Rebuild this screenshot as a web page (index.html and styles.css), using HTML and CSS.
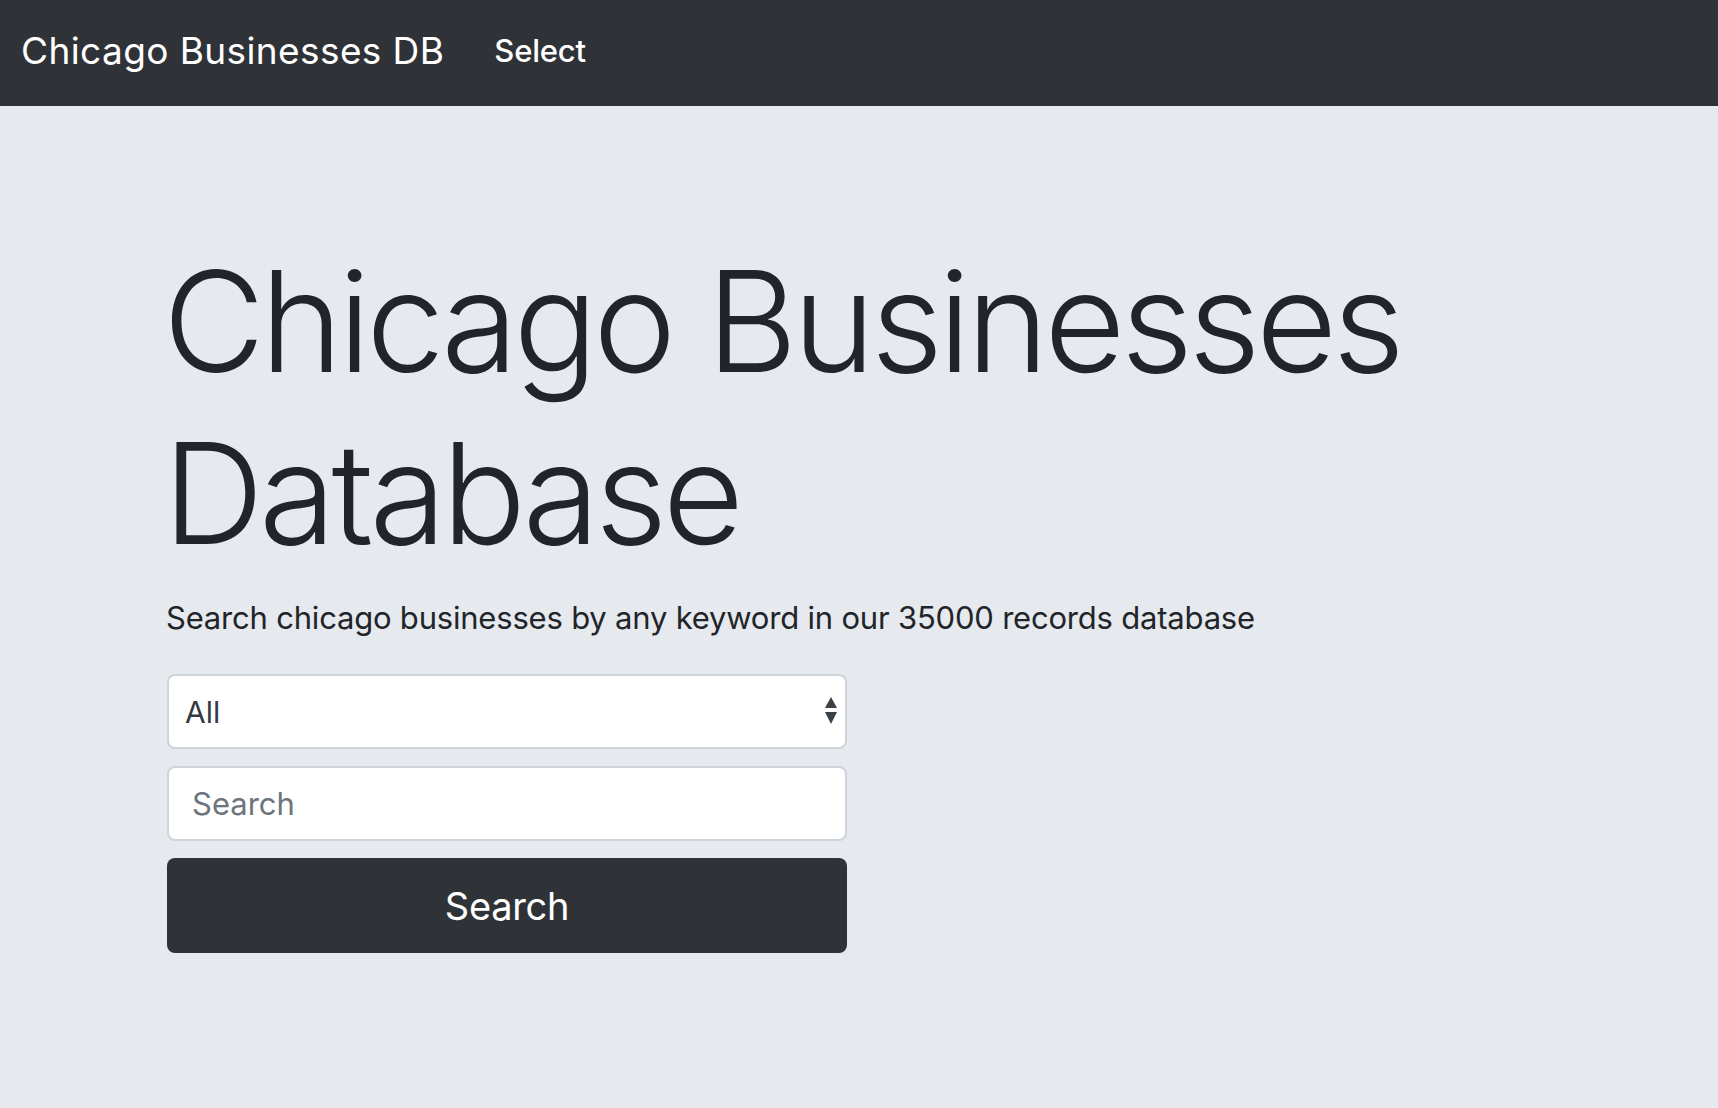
FILE: index.html
```html
<!DOCTYPE html>
<html lang="en">
<head>
<meta charset="utf-8">
<title>Chicago Businesses DB</title>
<link rel="stylesheet" href="styles.css">
</head>
<body>
<nav class="navbar">
  <a class="brand" href="#">Chicago Businesses DB</a>
  <a class="nav-link" href="#">Select</a>
</nav>
<main class="jumbotron">
  <h1 class="display">Chicago Businesses Database</h1>
  <p class="lead">Search chicago businesses by any keyword in our 35000 records database</p>
  <form class="search-form">
    <div class="select-wrap">
      <select class="control select">
        <option>All</option>
      </select>
      <svg class="select-arrows" width="14" height="30" viewBox="0 0 14 30" aria-hidden="true">
        <polygon points="7,0 13,11 1,11" fill="#3b4045"/>
        <polygon points="1,15 13,15 7,27" fill="#3b4045"/>
      </svg>
    </div>
    <input class="control input" type="text" placeholder="Search">
    <button class="btn" type="button">Search</button>
  </form>
</main>
</body>
</html>
```

FILE: styles.css
```css
html, body {
  margin: 0;
  padding: 0;
}
body {
  background: #e6e9ed;
  font-family: Inter, "Liberation Sans", sans-serif;
  color: #212529;
  min-height: 1108px;
}
.navbar {
  background: #2f3338;
  height: 106px;
  display: flex;
  align-items: center;
  padding: 0 0 6px 21px;
  box-sizing: border-box;
}
.brand {
  color: #fff;
  text-decoration: none;
  font-size: 37px;
  font-weight: 400;
  letter-spacing: 0.4px;
  margin-right: 50px;
  line-height: 1;
}
.nav-link {
  color: #fff;
  text-decoration: none;
  font-size: 31px;
  font-weight: 500;
  letter-spacing: -0.2px;
  line-height: 1;
}
.jumbotron {
  padding: 129px 0 0 167px;
}
.display {
  margin: 0 0 0 -4px;
  font-size: 140px;
  font-weight: 300;
  line-height: 172px;
  letter-spacing: -4.6px;
  color: #212529;
  max-width: 1300px;
}
.lead {
  margin: 16px 0 0 -1px;
  font-size: 31px;
  line-height: 46px;
  font-weight: 400;
  letter-spacing: -0.2px;
}
.search-form {
  width: 680px;
  margin-top: 33px;
  display: flex;
  flex-direction: column;
  gap: 17px;
}
.select-wrap {
  position: relative;
}
.control {
  display: block;
  width: 100%;
  box-sizing: border-box;
  height: 75px;
  border: 2px solid #ced4da;
  border-radius: 8px;
  background: #fff;
  font-family: Inter, "Liberation Sans", sans-serif;
  font-size: 30px;
  color: #343a40;
  margin: 0;
}
.select {
  -webkit-appearance: none;
  appearance: none;
  padding: 0 40px 0 16px;
}
.select-arrows {
  position: absolute;
  right: 9px;
  top: 23px;
  pointer-events: none;
}
.input {
  padding: 0 23px;
  font-size: 31px;
}
.input::placeholder {
  color: #6c757d;
  opacity: 1;
}
.btn {
  height: 95px;
  width: 100%;
  border: none;
  border-radius: 8px;
  background: #2f3338;
  color: #fff;
  font-family: Inter, "Liberation Sans", sans-serif;
  font-size: 38px;
  font-weight: 400;
  letter-spacing: -0.3px;
  margin: 0;
}
```
